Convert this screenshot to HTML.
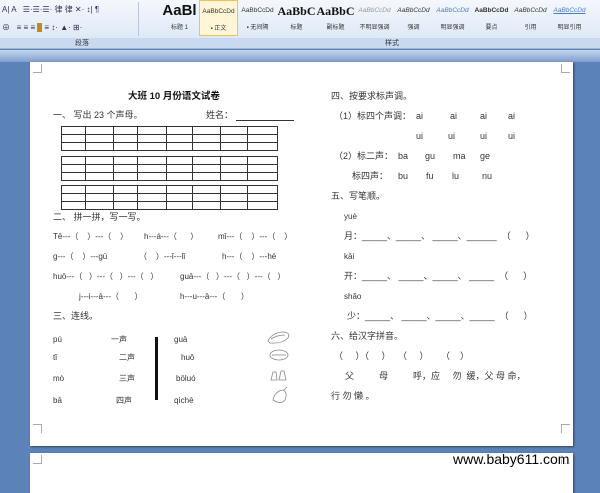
<!DOCTYPE html>
<html><head><meta charset="utf-8"><style>
*{margin:0;padding:0;box-sizing:border-box}
body{width:600px;height:484px;overflow:hidden;background:#5b83ba;font-family:"Liberation Sans","Noto Sans CJK SC",sans-serif;position:relative;color:#333}
.a{position:absolute;white-space:pre;font-size:9px;line-height:11px}
.p{font-size:8px}
#rib{position:absolute;left:0;top:0;width:600px;height:38px;background:linear-gradient(#f4f8fd,#dfe9f6)}
#lab{position:absolute;left:0;top:38px;width:600px;height:11px;background:#c9daf0;border-bottom:1px solid #9db6d6}
#band{position:absolute;left:0;top:50px;width:600px;height:12px;background:linear-gradient(#c5d6ee,#7f9fcf)}
.st{position:absolute;top:0;width:39px;height:36px;text-align:center;font-size:6px;color:#333;overflow:hidden}
.st b{display:block;height:22px;line-height:22px;font-weight:normal;font-size:6.5px;white-space:nowrap}
.page{position:absolute;left:30px;width:543px;background:#fff;box-shadow:1px 1px 2px #345}
.g{position:absolute;left:61px;width:217px;height:25px;border:1px solid #333;background:
linear-gradient(#333,#333) 0 7px/100% 1px no-repeat,linear-gradient(#333,#333) 0 15px/100% 1px no-repeat}
.g i{position:absolute;top:0;height:100%;width:1px;background:#333}
.cr{position:absolute;width:9px;height:9px;border-color:#aaa;border-style:solid}
</style></head><body>
<div id="rib">
 <div class="a" style="left:2px;top:4px;font-size:8px;color:#335">A| A &nbsp; ☰·☰·☰· 律 律 ✕· ↕| ¶</div>
 <div class="a" style="left:2px;top:22px;font-size:8px;color:#335">⊕ &nbsp; ≡ ≡ ≡ <span style="background:#c08a20;color:#c08a20">■</span> ≡ ↕· ▲· ⊞·</div>
 <div style="position:absolute;left:138px;top:2px;width:1px;height:34px;background:#b8c8dc"></div>
 <div class="st" style="left:160px"><b style="font-size:15px;font-weight:bold;color:#111">AaBl</b>标题 1</div>
 <div class="st" style="left:199px;border:1px solid #f0c060;background:#fff6d8"><b>AaBbCcDd</b>▪ 正文</div>
 <div class="st" style="left:238px"><b>AaBbCcDd</b>▪ 无间隔</div>
 <div class="st" style="left:277px"><b style="font-size:12px;font-family:'Liberation Serif';font-weight:bold;color:#111">AaBbC</b>标题</div>
 <div class="st" style="left:316px"><b style="font-size:12px;font-family:'Liberation Serif';font-weight:bold;color:#111">AaBbC</b>副标题</div>
 <div class="st" style="left:355px"><b style="color:#999;font-style:italic">AaBbCcDd</b>不明显强调</div>
 <div class="st" style="left:394px"><b style="font-style:italic">AaBbCcDd</b>强调</div>
 <div class="st" style="left:433px"><b style="color:#4a7bc0;font-style:italic">AaBbCcDd</b>明显强调</div>
 <div class="st" style="left:472px"><b style="font-weight:bold">AaBbCcDd</b>要点</div>
 <div class="st" style="left:511px"><b style="font-style:italic">AaBbCcDd</b>引用</div>
 <div class="st" style="left:550px"><b style="color:#4a7bc0;font-style:italic;text-decoration:underline">AaBbCcDd</b>明显引用</div>
</div>
<div id="lab"><div class="a" style="left:75px;top:0;font-size:7px">段落</div><div class="a" style="left:385px;top:0;font-size:7px">样式</div></div>
<div id="band"></div>

<div class="page" style="top:62px;height:384px">
 <div class="cr" style="left:3px;top:2px;border-width:0 1px 1px 0"></div>
 <div class="cr" style="left:531px;top:2px;border-width:0 0 1px 1px"></div>
 <div class="cr" style="left:3px;top:362px;border-width:1px 1px 0 0"></div>
 <div class="cr" style="left:531px;top:362px;border-width:1px 0 0 1px"></div>
</div>
<div class="page" style="top:453px;height:40px">
 <div class="cr" style="left:3px;top:2px;border-width:0 1px 1px 0"></div>
 <div class="cr" style="left:531px;top:2px;border-width:0 0 1px 1px"></div>
</div>

<div class="a" style="left:128px;top:91px;font-weight:bold;font-size:9.5px;color:#111">大班 10 月份语文试卷</div>
<div class="a" style="left:53px;top:110px">一、 写出 23 个声母。</div>
<div class="a" style="left:206px;top:110px">姓名：</div>
<div style="position:absolute;left:236px;top:120px;width:58px;height:1px;background:#333"></div>

<div class="g" style="top:126px"><i style="left:23px"></i><i style="left:51px"></i><i style="left:75px"></i><i style="left:104px"></i><i style="left:130px"></i><i style="left:158px"></i><i style="left:185px"></i></div>
<div class="g" style="top:156px"><i style="left:23px"></i><i style="left:51px"></i><i style="left:75px"></i><i style="left:104px"></i><i style="left:130px"></i><i style="left:158px"></i><i style="left:185px"></i></div>
<div class="g" style="top:185px"><i style="left:23px"></i><i style="left:51px"></i><i style="left:75px"></i><i style="left:104px"></i><i style="left:130px"></i><i style="left:158px"></i><i style="left:185px"></i></div>

<div class="a" style="left:53px;top:212px">二、 拼一拼，写一写。</div>
<div class="a p" style="left:53px;top:231px">Tē---（    ）---（    ）</div>
<div class="a p" style="left:144px;top:231px">h---á---（      ）</div>
<div class="a p" style="left:218px;top:231px">mǐ---（    ）---（    ）</div>
<div class="a p" style="left:53px;top:251px">g---（    ）---gū</div>
<div class="a p" style="left:139px;top:251px">（    ）---ǐ---lǐ</div>
<div class="a p" style="left:222px;top:251px">h---（    ）---hé</div>
<div class="a p" style="left:53px;top:271px">huō---（   ）---（   ）---（   ）</div>
<div class="a p" style="left:180px;top:271px">guā---（   ）---（   ）---（   ）</div>
<div class="a p" style="left:79px;top:291px">j---i---ā---（       ）</div>
<div class="a p" style="left:180px;top:291px">h---u---ā---（       ）</div>
<div class="a" style="left:53px;top:311px">三、连线。</div>
<div class="a p" style="left:53px;top:334px">pú</div><div class="a p" style="left:111px;top:334px">一声</div><div class="a p" style="left:174px;top:334px">guā</div>
<div class="a p" style="left:53px;top:352px">tǐ</div><div class="a p" style="left:119px;top:352px">二声</div><div class="a p" style="left:181px;top:352px">huǒ</div>
<div class="a p" style="left:53px;top:373px">mò</div><div class="a p" style="left:119px;top:373px">三声</div><div class="a p" style="left:176px;top:373px">bōluó</div>
<div class="a p" style="left:53px;top:395px">bā</div><div class="a p" style="left:116px;top:395px">四声</div><div class="a p" style="left:174px;top:395px">qìchē</div>
<div style="position:absolute;left:155px;top:337px;width:3px;height:63px;background:#111"></div>
<svg style="position:absolute;left:265px;top:328px" width="30" height="80" fill="none" stroke="#888" stroke-width=".8">
<path d="M3 13 q4-8 14-9 q9 0 6 6 q-6 6-18 5z M6 11 q6-4 14-4"/>
<ellipse cx="14" cy="27" rx="9" ry="5"/><path d="M7 27 h14"/>
<path d="M6 52 l2-8 l3 0 l1 8 z M14 52 l2-9 l3 0 l2 9 z"/>
<path d="M8 72 q2-9 10-10 q5 2 2 10 q-4 5-12 0z M19 62 l3-3"/>
</svg>

<div class="a" style="left:331px;top:91px">四、按要求标声调。</div>
<div class="a" style="left:334px;top:111px">（1）标四个声调：</div>
<div class="a" style="left:416px;top:111px">ai</div><div class="a" style="left:450px;top:111px">ai</div><div class="a" style="left:480px;top:111px">ai</div><div class="a" style="left:508px;top:111px">ai</div>
<div class="a" style="left:416px;top:131px">ui</div><div class="a" style="left:448px;top:131px">ui</div><div class="a" style="left:480px;top:131px">ui</div><div class="a" style="left:508px;top:131px">ui</div>
<div class="a" style="left:334px;top:151px">（2）标二声：</div>
<div class="a" style="left:398px;top:151px">ba</div><div class="a" style="left:425px;top:151px">gu</div><div class="a" style="left:453px;top:151px">ma</div><div class="a" style="left:480px;top:151px">ge</div>
<div class="a" style="left:352px;top:171px">标四声：</div>
<div class="a" style="left:398px;top:171px">bu</div><div class="a" style="left:426px;top:171px">fu</div><div class="a" style="left:452px;top:171px">lu</div><div class="a" style="left:482px;top:171px">nu</div>
<div class="a" style="left:331px;top:191px">五、写笔顺。</div>
<div class="a p" style="left:344px;top:211px">yuè</div>
<div class="a" style="left:344px;top:231px">月：_____、_____、 _____、______  （      ）</div>
<div class="a p" style="left:344px;top:251px">kāi</div>
<div class="a" style="left:344px;top:271px">开：_____、 _____、_____、 _____  （      ）</div>
<div class="a p" style="left:344px;top:291px">shǎo</div>
<div class="a" style="left:347px;top:311px">少：_____、 _____、_____、_____  （      ）</div>
<div class="a" style="left:331px;top:331px">六、给汉字拼音。</div>
<div class="a" style="left:334px;top:351px">（     ）（     ）   （     ）     （    ）</div>
<div class="a" style="left:340px;top:371px">  父          母          呼，应     勿  缓，父 母 命，</div>
<div class="a" style="left:331px;top:391px">行 勿 懒 。</div>

<div class="a" style="left:453px;top:451px;font-size:14px;line-height:16px;color:#000;text-shadow:1px 0 #fff,-1px 0 #fff,0 1px #fff,0 -1px #fff,1px 1px #fff,-1px -1px #fff">www.baby611.com</div>
</body></html>
